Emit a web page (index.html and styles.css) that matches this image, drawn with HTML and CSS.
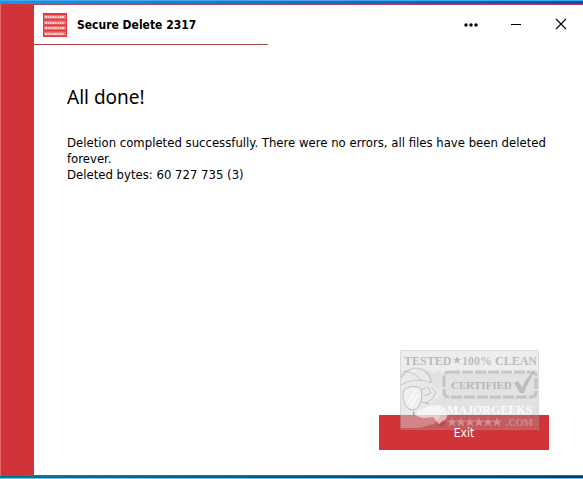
FILE: index.html
```
<!DOCTYPE html>
<html lang="en">
<head>
<meta charset="UTF-8" />
<title>Secure Delete 2317</title>
<link rel="stylesheet" href="styles.css">
</head>
<body>
	<div class="window">
		<div class="sidebar"></div>
		<div class="main">
			<div class="header">
				<div class="title">
					<svg class="logo" viewBox="0 0 24 24" aria-hidden="true">
						<rect width="24" height="24" fill="#e5383c"/>
						<path d="M1 4h22M1 9.500h22M1 15h22M1 20.500h22" stroke="#fff" stroke-opacity=".3" stroke-width="4"/>
						<g class="bits">
							<text x="2" y="5">01101100</text>
							<text x="2" y="11">01101111</text>
							<text x="2" y="16">01110110</text>
							<text x="2" y="22">01100101</text>
						</g>
					</svg>
					<h1>Secure Delete 2317</h1>
				</div>
				<div class="controls">
					<button type="button" aria-label="Menu">
						<svg width="16" height="16" viewBox="0 0 16 16"><circle cx="3" cy="9" r="1.7"/><circle cx="8" cy="9" r="1.7"/><circle cx="13" cy="9" r="1.7"/></svg>
					</button>
					<button type="button" aria-label="Minimize">
						<svg width="16" height="16" viewBox="0 0 16 16"><path d="M3 8.5h10" stroke="#000"/></svg>
					</button>
					<button type="button" aria-label="Close">
						<svg width="16" height="16" viewBox="0 0 16 16"><path d="M3 3l10 10M13 3L3 13" stroke="#000" stroke-width="1.1"/></svg>
					</button>
				</div>
			</div>
			<div class="content">
				<h2>All done!</h2>
				<p>Deletion completed successfully. There were no errors, all files have been deleted forever.</p>
				<p>Deleted bytes: 60 727 735 (3)</p>
			</div>
			<div class="footer">
				<button type="button" class="exit"><span>Exit</span></button>
				<svg class="badge" viewBox="0 0 139 80" role="img" aria-label="Tested 100% clean, certified">
					<rect x=".5" y=".5" width="138" height="79" fill="#aaa" fill-opacity=".34" stroke="#aaa" stroke-opacity=".3"/>
					<!-- torn edge under the top line -->
					<path d="M1 1h137v19l-5 3-5-3-5 3-5-3-5 3-5-3-5 3-5-3-5 3-5-3-5 3-5-3-5 3-5-3-5 3-5-3-5 3-5-3-5 3-5-3-5 3-5-3-5 3-5-3-5 3-5-3-5 3-2-2z" fill="#fff" fill-opacity=".4"/>
					<!-- face with the glasses -->
					<path d="M1 28c5-9 14-12 22-8 6 3 8 8 8 13l4 5 9-1-2 7-7 6-5 5 13 1-3 12-6 6-16 4H1z" fill="#fff" fill-opacity=".25"/>
					<path d="M1 28c5-9 14-12 22-8 6 3 8 8 8 13" fill="none" stroke="#999" stroke-opacity=".3" stroke-width="2"/>
					<path d="M1 35c8-5 20-7 30-2M4 21c8 1 14 4 17 10" fill="none" stroke="#999" stroke-opacity=".4"/>
					<path d="M4 40c4-4 13-5 17-1 2 7 0 16-5 20-4 2-9 0-11-5-2-4-3-9-1-14z" fill="#fff" fill-opacity=".3" stroke="#888" stroke-opacity=".45"/>
					<path d="M7 54l9-14M10 57l9-14" stroke="#fff" stroke-opacity=".6" stroke-width="2"/>
					<path d="M21 40l7-3 3 6-7 3M31 37l5 5-3 6-8 6M22 52l8 2" fill="none" stroke="#888" stroke-opacity=".4"/>
					<path d="M14 64c10-7 25-13 31-6 5 6 2 13-6 16l-6-7-7 1c-6 0-9-2-12-4z" fill="#fff" fill-opacity=".55"/>
					<path d="M13 61l2 3-2 2zM38 75l5-5 3 3-5 4z" fill="#b8383c" fill-opacity=".55"/>
					<path d="M49 22h82q5 0 5 5v15q0 5-5 5H49q-5 0-5-5V27q0-5 5-5z" fill="none" stroke="#999" stroke-opacity=".4" stroke-width="3" stroke-dasharray="11 2"/>
					<path d="M114 33l4-2 4 6c3-7 8-13 14-18-5 8-9 16-12 24h-4z" fill="#999" fill-opacity=".5"/>
					<g class="stamp">
						<text x="4" y="15">TESTED</text>
						<path d="M57 6l1 3h3l-2.500 2 1 3-2.500-2-2.500 2 1-3-2.500-2h3z"/>
						<text x="62" y="15">100%</text>
						<text x="95" y="15">CLEAN</text>
						<text class="certified" x="51" y="39">CERTIFIED</text>
					</g>
					<text class="brand" x="47" y="64">MAJORGEEKS</text>
					<g fill="#fff" fill-opacity=".3">
						<path id="star" d="M52 67l1 3.500h4l-3 2.300 1.200 3.700-3.200-2.300-3.200 2.300 1.200-3.700-3-2.300h4z"/>
						<use href="#star" x="9"/><use href="#star" x="18"/><use href="#star" x="27"/><use href="#star" x="36"/><use href="#star" x="45"/>
						<text class="domain" x="106" y="76">.COM</text>
					</g>
				</svg>
			</div>
		</div>
	</div>
</body>
</html>
```
FILE: styles.css
```
* {box-sizing: border-box;}
body {margin: 0; font-family: "DejaVu Sans Condensed", "DejaVu Sans", sans-serif; font-size: 13px; line-height: 16px; color: #000;}
h1, h2, p {margin: 0;}
button {padding: 0; border: 0; background: none; font: inherit;}

.window {display: flex; min-height: 100vh; padding: 4px 0 3px; background: linear-gradient(#48a8ee 1px, transparent 1px) top / 100% 4px no-repeat, linear-gradient(#65cbf5, #65cbf5) bottom / 100% 1px no-repeat, linear-gradient(90deg, #079cec, #0752b8) top / 100% 4px no-repeat, linear-gradient(90deg, #087597, #073875) bottom / 100% 3px no-repeat;}
.sidebar {width: 34px; background: #d03439; border-left: 1px solid #e06a6e;}
.main {flex: 1; display: flex; flex-direction: column; background: #fff; border-top: 1px solid #b54257; border-bottom: 1px solid #b5354b;}

.header {display: flex; justify-content: space-between; height: 40px;}
.title {display: flex; align-items: center; gap: 10px; width: 234px; padding-left: 9px; border-bottom: 1px solid #a9444f;}
.title h1 {font-size: 12px; font-weight: bold; white-space: nowrap;}
.logo {width: 24px; height: 24px;}
.bits {fill: #fff; font: bold 4px "Liberation Mono", monospace;}
.controls {display: flex;}
.controls button {display: flex; align-items: center; justify-content: center; width: 45px; height: 38px;}

.content {flex: 1; padding: 40px 32px 0 33px;}
.content h2 {margin-bottom: 26px; font-family: "Noto Sans", sans-serif; font-size: 19px; font-weight: normal; line-height: 24px;}

.footer {position: relative; display: flex; justify-content: flex-end; padding: 0 34px 25px;}
.exit {width: 170px; height: 35px; background: #d03439; color: #fff; font-size: 12px;}
.exit span {position: relative; z-index: 1;}
.badge {position: absolute; right: 44px; bottom: 45px; width: 139px; height: 80px; pointer-events: none;}
.stamp {fill: #999; fill-opacity: .62; font: bold 12px "Liberation Serif", serif;}
.certified {font-size: 11px;}
.brand {fill: #fff; fill-opacity: .9; font: bold 12px "Liberation Serif", serif;}
.domain {font: bold 10px "Liberation Serif", serif;}
```
